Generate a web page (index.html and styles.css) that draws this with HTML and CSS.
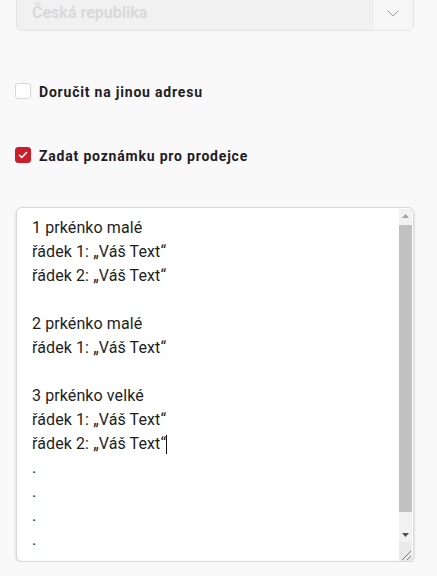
FILE: index.html
```html
<!DOCTYPE html>
<html lang="cs">
<head>
<meta charset="utf-8">
<link rel="stylesheet" href="styles.css">
</head>
<body>
<div class="page">
  <div class="select">
    <span class="select-value">Česká republika</span>
    <span class="select-arrow">
      <svg width="12" height="7" viewBox="0 0 12 7"><path d="M0.5 0.5 L6 6 L11.5 0.5" fill="none" stroke="#9a9a9a" stroke-width="1"/></svg>
    </span>
  </div>

  <label class="check-row first">
    <span class="box"></span>
    <span class="check-label">Doručit na jinou adresu</span>
  </label>

  <label class="check-row second">
    <span class="box checked">
      <svg width="10" height="8" viewBox="0 0 10 8"><path d="M1.5 4.2 L3.8 6.5 L8.5 1.5" fill="none" stroke="#fff" stroke-width="1.6" stroke-linecap="round" stroke-linejoin="round"/></svg>
    </span>
    <span class="check-label">Zadat poznámku pro prodejce</span>
  </label>

  <div class="note-wrap">
    <textarea class="note">1 prkénko malé
řádek 1: „Váš Text“
řádek 2: „Váš Text“

2 prkénko malé
řádek 1: „Váš Text“

3 prkénko velké
řádek 1: „Váš Text“
řádek 2: „Váš Text“
.
.
.
.

</textarea>
    <span class="caret" aria-hidden="true"></span>
    <div class="scrollbar" aria-hidden="true">
      <div class="sb-btn">
        <svg width="7" height="4" viewBox="0 0 7 4"><path d="M0 4 L3.5 0 L7 4 Z" fill="#a3a3a3"/></svg>
      </div>
      <div class="sb-track"><div class="sb-thumb"></div></div>
      <div class="sb-btn">
        <svg width="7" height="4" viewBox="0 0 7 4"><path d="M0 0 L7 0 L3.5 4 Z" fill="#505050"/></svg>
      </div>
      <div class="sb-corner">
        <svg width="13" height="13" viewBox="0 0 13 13"><path d="M3 12 L12 3 M8 12 L12 8" stroke="#7a7a7a" stroke-width="1" fill="none"/></svg>
      </div>
    </div>
  </div>
</div>
</body>
</html>
```

FILE: styles.css
```css
html, body {
  margin: 0;
  padding: 0;
  background: #f9f9f9;
}

.page {
  margin-top: -7px;
  padding: 0 23px 0 16px;
  font-family: Roboto, "Liberation Sans", sans-serif;
}

.select {
  display: flex;
  height: 36px;
  border: 1px solid #e3e3e3;
  border-radius: 6px;
  background: #f1f1f1;
  overflow: hidden;
}

.select-value {
  flex: 1;
  display: flex;
  align-items: center;
  padding-left: 15px;
  font-size: 16px;
  font-weight: 700;
  color: #d9d9d9;
}

.select-arrow {
  width: 40px;
  display: flex;
  align-items: center;
  justify-content: center;
  padding-top: 3px;
  background: #f6f6f6;
  border-left: 1px solid #ececec;
}

.check-row {
  display: flex;
  align-items: center;
  gap: 8px;
  margin-left: -1px;
  height: 16px;
}

.check-row.first {
  margin-top: 52px;
}

.check-row.second {
  margin-top: 48px;
}

.box {
  width: 14px;
  height: 14px;
  border: 1px solid #d8d8d8;
  border-radius: 3px;
  background: #fff;
  display: flex;
  align-items: center;
  justify-content: center;
  flex: none;
}

.box.checked {
  background: #c81f2b;
  border-color: #c81f2b;
}

.check-label {
  font-size: 14px;
  font-weight: 700;
  letter-spacing: 0.8px;
  color: #1f1c26;
  line-height: 16px;
  padding-top: 1px;
}

.note-wrap {
  position: relative;
  width: 398px;
  height: 355px;
  margin-top: 44px;
}

.note {
  display: block;
  box-sizing: border-box;
  width: 100%;
  height: 100%;
  margin: 0;
  padding: 8px 30px 8px 15px;
  border: 1px solid #d9d9d9;
  border-radius: 6px;
  box-shadow: 0 1px 3px rgba(0, 0, 0, 0.18);
  background: #fff;
  font-family: Roboto, "Liberation Sans", sans-serif;
  font-size: 16px;
  letter-spacing: 0.1px;
  line-height: 24px;
  color: #1e1e1e;
  resize: none;
  outline: none;
  overflow: hidden;
}

.caret {
  position: absolute;
  left: 150px;
  top: 228px;
  width: 1px;
  height: 19px;
  background: #111;
}

.scrollbar {
  position: absolute;
  top: 2px;
  right: 2px;
  bottom: 1px;
  width: 13px;
  display: flex;
  flex-direction: column;
  background: #f1f1f1;
  pointer-events: none;
}

.sb-btn {
  height: 14px;
  display: flex;
  align-items: center;
  justify-content: center;
  flex: none;
}

.sb-track {
  flex: 1;
  padding-top: 2px;
}

.sb-thumb {
  height: 287px;
  background: #c1c1c1;
}

.sb-corner {
  height: 19px;
  flex: none;
  background: #e9e9e9;
  display: flex;
  align-items: flex-end;
  justify-content: flex-end;
}

.sb-corner svg {
  display: block;
}
```
